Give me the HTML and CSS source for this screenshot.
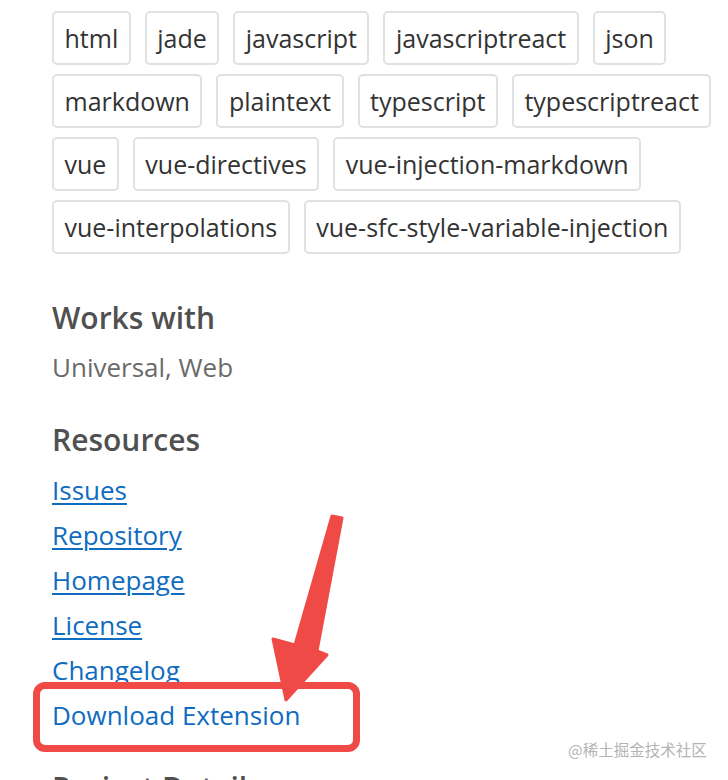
FILE: index.html
```html
<!DOCTYPE html>
<html lang="en">
<head>
<meta charset="utf-8">
<title>Extension details</title>
<link rel="stylesheet" href="styles.css">
</head>
<body>
<div class="page">
  <div class="tags">
    <span class="tag">html</span>
    <span class="tag">jade</span>
    <span class="tag">javascript</span>
    <span class="tag">javascriptreact</span>
    <span class="tag">json</span>
    <span class="tag">markdown</span>
    <span class="tag">plaintext</span>
    <span class="tag">typescript</span>
    <span class="tag">typescriptreact</span>
    <span class="tag">vue</span>
    <span class="tag">vue-directives</span>
    <span class="tag">vue-injection-markdown</span>
    <span class="tag">vue-interpolations</span>
    <span class="tag">vue-sfc-style-variable-injection</span>
  </div>

  <section class="works">
    <h2 class="heading">Works with</h2>
    <p class="plain">Universal, Web</p>
  </section>

  <section class="resources">
    <h2 class="heading">Resources</h2>
    <ul class="links">
      <li><a href="#">Issues</a></li>
      <li><a href="#">Repository</a></li>
      <li><a href="#">Homepage</a></li>
      <li><a href="#">License</a></li>
      <li><a href="#">Changelog</a></li>
      <li><a href="#" class="nounder">Download Extension</a></li>
    </ul>
  </section>

  <section class="details">
    <h2 class="heading">Project Details</h2>
  </section>
</div>

<div class="highlight"></div>
<svg class="arrow" width="130" height="200" viewBox="230 505 130 200" aria-hidden="true">
  <polygon points="332,516 342,518 317,651 327,655 286,700 273,639 295,645" fill="#ef4a46" stroke="#ef4a46" stroke-width="3" stroke-linejoin="round"/>
</svg>
<div class="watermark">@稀土掘金技术社区</div>
</body>
</html>
```

FILE: styles.css
```css
html, body {
  margin: 0;
  padding: 0;
  background: #ffffff;
}

body {
  font-family: "Open Sans", "Noto Sans", "Noto Sans CJK SC", sans-serif;
  width: 728px;
  height: 780px;
  overflow: hidden;
  position: relative;
}

.page {
  padding: 11px 0 0 52px;
}

.tags {
  display: flex;
  flex-wrap: wrap;
  gap: 9px 14px;
  width: 662px;
}

.tag {
  box-sizing: border-box;
  height: 54px;
  padding: 0 10.5px;
  display: flex;
  align-items: center;
  border: 2px solid #e1e1e1;
  border-radius: 5px;
  font-size: 25px;
  color: #333333;
  line-height: 1;
}

.heading {
  margin: 0;
  font-size: 30px;
  font-weight: 600;
  color: #505050;
  line-height: 40px;
}

.works {
  margin-top: 44px;
}

.plain {
  margin: 11px 0 0;
  font-size: 26px;
  line-height: 36px;
  color: #6a6a6a;
}

.resources {
  margin-top: 35px;
}

.links {
  list-style: none;
  margin: 8px 0 0;
  padding: 0;
}

.links li {
  height: 45px;
  line-height: 45px;
  font-size: 26px;
}

.links a {
  color: #0f6cc1;
  text-decoration: underline;
  text-underline-offset: 3px;
  text-decoration-thickness: 2px;
}

.links a.nounder {
  text-decoration: none;
}

.details {
  margin-top: 30px;
}

.highlight {
  position: absolute;
  left: 33px;
  top: 682px;
  width: 327px;
  height: 70px;
  box-sizing: border-box;
  border: 7px solid #ef4a46;
  border-radius: 12px;
}

.arrow {
  position: absolute;
  left: 230px;
  top: 505px;
}

.watermark {
  position: absolute;
  left: 568px;
  top: 738px;
  font-family: "Noto Sans CJK SC", sans-serif;
  font-size: 15.5px;
  color: #b4b4b4;
}
```
